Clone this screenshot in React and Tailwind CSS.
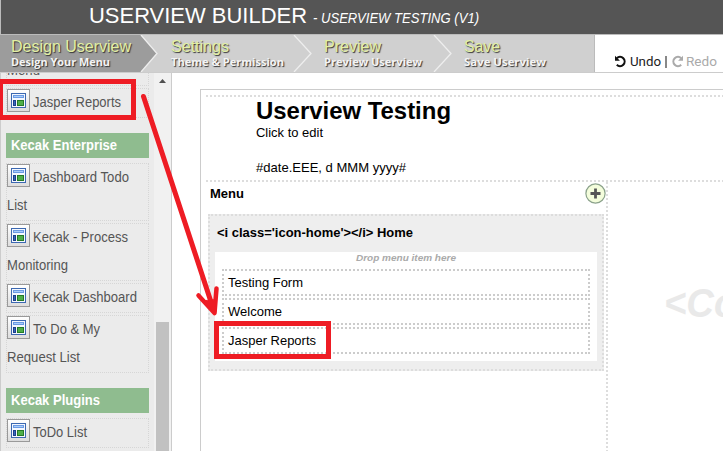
import React from "react";

const steps = [
  { title: "Design Userview", sub: "Design Your Menu", width: "w-[159px] pl-[11px]", tw: 120, sw: 99 },
  { title: "Settings", sub: "Theme & Permission", width: "w-[153px] pl-[12px]", tw: 58, sw: 113 },
  { title: "Preview", sub: "Preview Userview", width: "w-[140px] pl-[12px]", tw: 57, sw: 98 },
  { title: "Save", sub: "Save Userview", width: "w-[142px] pl-[12px]", tw: 36, sw: 82 },
];

// Single line of SVG text held to a fixed advance width.
function Fit({ children, w, size, className = "", h = 16, base = 13, shadow = false }) {
  return (
    <svg width={w + 3} height={h} className={`block shrink-0 overflow-visible ${className}`}>
      <text x="0" y={base} fontSize={size} textLength={w} lengthAdjust="spacingAndGlyphs" fill="currentColor" className={shadow ? "[text-shadow:1px_1px_1px_#333]" : ""}>
        {children}
      </text>
    </svg>
  );
}

function MenuIcon() {
  return (
    <span className="flex h-[23px] w-[23px] shrink-0 items-center justify-center border border-[#999] bg-gradient-to-b from-white to-[#ddd]">
      <svg width="15" height="15" viewBox="0 0 15 15" shapeRendering="crispEdges">
        <rect x="0.5" y="0.5" width="14" height="14" fill="#f4f8ff" stroke="#3c68b0" />
        <rect x="2" y="2" width="11" height="3" fill="#6b9be4" />
        <rect x="3" y="3" width="9" height="1" fill="#a9ccfa" />
        <rect x="2" y="7" width="3" height="6" fill="#1d3f8c" />
        <rect x="3" y="8" width="1" height="4" fill="#3767ba" />
        <rect x="6" y="7" width="7" height="6" fill="#247a28" />
        <rect x="7" y="8" width="5" height="4" fill="#4eae48" />
      </svg>
    </span>
  );
}

function Item({ text, w, rest, restW }) {
  return (
    <div className="mb-[2px] border border-dotted border-[#d6d6d6] text-[#555]">
      <div className="flex h-[28px] items-start">
        <MenuIcon />
        <Fit w={w} size="14" h={28} base={18} className="ml-[3px]">{text}</Fit>
      </div>
      {rest && <Fit w={restW} size="14" h={28} base={18}>{rest}</Fit>}
    </div>
  );
}

function Group({ children, w }) {
  return (
    <div className="mt-[15px] mb-[5px] h-[25px] bg-[#8fbc8f] pl-[5px] font-bold text-white">
      <Fit w={w} size="14" h={25} base={17}>{children}</Fit>
    </div>
  );
}

function Entry({ children, w }) {
  return (
    <div className="h-[27px] border-2 border-dotted border-[#ccc] pl-[4px]">
      <Fit w={w} size="13.33" h={23} base={16}>{children}</Fit>
    </div>
  );
}

export default function App() {
  return (
    <div className="relative flex h-[451px] w-[723px] flex-col overflow-hidden bg-white font-['Liberation_Sans',Arial,sans-serif] text-black">
      <header className="flex h-[34px] shrink-0 border-l border-[#bbb] bg-[#555] pl-[88px] text-white">
        <Fit w={218} size="22.5" h={34} base={23}>USERVIEW BUILDER</Fit>
        <Fit w={166} size="14" h={34} base={23} className="ml-[3px] italic">- USERVIEW TESTING (V1)</Fit>
      </header>

      <nav className="relative flex h-[39px] shrink-0 border-y border-t-[#bbb] border-b-[#ccc]">
        <div className="relative flex h-[37px] w-[595px] border-r border-[#bbb] bg-[#d0d0d0]">
          <svg className="absolute top-0 left-0" width="595" height="37" fill="none">
            <path d="M0 0H141L157 18.5L141 37H0Z" fill="#9c9c9c" />
            <path d="M141 0L157 18.5L141 37M294 0L311 18.5L294 37M434 0L451 18.5L434 37" stroke="#eee" strokeWidth="1.3" />
          </svg>
          {steps.map((s) => (
            <div key={s.title} className={`relative shrink-0 ${s.width}`}>
              <Fit w={s.tw} size="16" h={20} base={17} shadow className="text-[#e3f0a3]">{s.title}</Fit>
              <Fit w={s.sw} size="11" h={16} base={11} shadow className="font-['Open_Sans',sans-serif] font-bold text-[#f4f4f4]">{s.sub}</Fit>
            </div>
          ))}
        </div>
        <div className="flex items-start pt-[20px] pl-[19px] font-[Roboto,sans-serif]">
          <svg width="13" height="13" viewBox="0 0 13 13" fill="none" stroke="#111" strokeWidth="2.1">
            <path d="M2.8 3.2A4.6 4.6 0 1 1 2.8 9.800" />
            <path d="M1 0.800V5.700H5.900Z" fill="#111" stroke="none" />
          </svg>
          <Fit w={31} size="13" base={12} className="-mt-[1px] ml-[3px] text-[#222]">Undo</Fit>
          <span className="mt-[1px] ml-[1px] h-[12px] w-[2px] bg-[#888]" />
          <svg className="ml-[4px]" width="13" height="13" viewBox="0 0 13 13" fill="none" stroke="#aaa" strokeWidth="2.1">
            <path d="M10.2 3.2A4.6 4.6 0 1 0 10.2 9.800" />
            <path d="M12 0.800V5.700H7.100Z" fill="#aaa" stroke="none" />
          </svg>
          <Fit w={31} size="13" base={12} className="-mt-[1px] ml-[2px] text-[#aaa]">Redo</Fit>
        </div>
      </nav>

      <div className="flex h-[378px]">
        <aside className="flex w-[172px] shrink-0 overflow-hidden border-x border-[#ccc] bg-[#ebebeb]">
          <div className="ml-[5px] w-[143px] shrink-0">
            <div className="mb-[2px] h-[13px] overflow-hidden border border-t-0 border-dotted border-[#d6d6d6] text-[#555]">
              <Fit w={33} size="14" h={12} base={2}>Menu</Fit>
            </div>
            <Item text="Jasper Reports" w={88} />
            <Group w={106}>Kecak Enterprise</Group>
            <Item text="Dashboard Todo" w={96} rest="List" restW={20} />
            <Item text="Kecak - Process" w={95} rest="Monitoring" restW={61} />
            <Item text="Kecak Dashboard" w={104} />
            <Item text="To Do & My" w={67} rest="Request List" restW={73} />
            <Group w={89}>Kecak Plugins</Group>
            <Item text="ToDo List" w={54} />
          </div>
          <div className="ml-[5px] flex w-[17px] shrink-0 flex-col items-center bg-[#f1f1f1]">
            <svg className="mt-[6px] shrink-0" width="7" height="4"><path d="M0 4L3.5 0L7 4Z" fill="#505050" /></svg>
            <div className="mt-[239px] w-[13px] flex-1 bg-[#c1c1c1]" />
          </div>
        </aside>

        <main className="mt-[16px] ml-[28px] flex-1 border-t border-l border-[#ccc] pt-[5px] pl-[5px]">
          <div className="h-[87px] border-y-2 border-dotted border-[#ddd] pl-[50px]">
            <Fit w={195} size="24" h={27} base={22} className="font-bold">Userview Testing</Fit>
            <Fit w={67} size="13.33" h={35} base={13}>Click to edit</Fit>
            <Fit w={150} size="13.33" h={18} base={13}>#date.EEE, d MMM yyyy#</Fit>
          </div>
          <div className="flex h-[270px]">
            <section className="w-[402px] shrink-0 border-r-2 border-dotted border-[#ddd] pr-[2px] pl-[2px]">
              <div className="flex h-[32px] justify-between pl-[2px]">
                <Fit w={34} size="13.33" h={28} base={16} className="font-bold">Menu</Fit>
                <svg className="mt-[1px] -mr-[2px]" width="21" height="21" viewBox="0 0 21 21">
                  <circle cx="10.5" cy="10.5" r="9.6" fill="#f4fddc" stroke="#8ba28b" strokeWidth="1.2" />
                  <path d="M10.5 5.5V15.5M5.5 10.5H15.5" stroke="#555" strokeWidth="2.8" />
                </svg>
              </div>
              <div className="h-[157px] border-2 border-dotted border-[#ddd] bg-[#eee] px-[5px]">
                <Fit w={196} size="13.33" h={36} base={21} className="ml-[2px] font-bold">{"<i class='icon-home'></i> Home"}</Fit>
                <div className="h-[109px] bg-white px-[7px]">
                  <div className="flex h-[17px] justify-center pl-[2px] font-bold text-[#aaa] italic">
                    <Fit w={100} size="9.5" h={17} base={9}>Drop menu item here</Fit>
                  </div>
                  <div className="flex flex-col gap-[2px]">
                    <Entry w={75}>Testing Form</Entry>
                    <Entry w={54}>Welcome</Entry>
                    <Entry w={88}>Jasper Reports</Entry>
                  </div>
                </div>
              </div>
            </section>
            <section className="flex-1 overflow-hidden pt-[103px] pl-[56px] font-bold text-[#e9e9e9] italic">
              <Fit w={189} size="40" h={50} base={32}>{"<Content>"}</Fit>
            </section>
          </div>
        </main>
      </div>

      <div className="absolute top-[79px] -left-[2px] h-[41px] w-[138px] border-5 border-[#ee1c24]" />
      <div className="absolute top-[321px] left-[214px] h-[38px] w-[117px] border-5 border-[#ee1c24]" />
      <svg className="absolute top-0 left-0" width="723" height="451" fill="none" stroke="#ee1c24" strokeWidth="5" strokeLinecap="round" strokeLinejoin="round">
        <path d="M143.5 96.5L214 311" />
        <path d="M198.500 295.500L214.500 313L216.500 288.500" strokeWidth="4.5" />
        <path d="M204 301L214.500 313L215.500 300Z" fill="#ee1c24" strokeWidth="1" />
      </svg>
    </div>
  );
}
